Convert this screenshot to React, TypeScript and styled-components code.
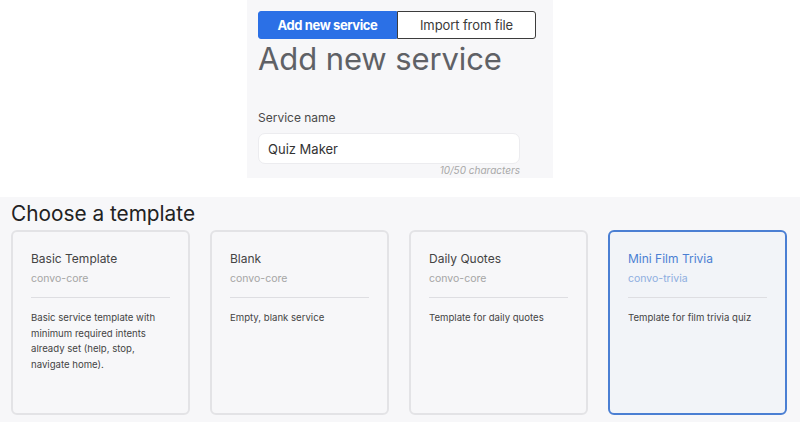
import React from "react";
import styled, { createGlobalStyle } from "styled-components";

const Global = createGlobalStyle`
  html, body { margin: 0; padding: 0; background: #ffffff; }
  body { font-family: "Inter", "Noto Sans", sans-serif; }
  * { box-sizing: border-box; }
`;

const Page = styled.div`
  width: 800px;
  height: 422px;
  display: flex;
  flex-direction: column;
  overflow: hidden;
`;

const TopPanel = styled.section`
  width: 306px;
  height: 178px;
  margin: 0 auto;
  background: #f7f7f9;
  padding: 11px 11px 0 11px;
  display: flex;
  flex-direction: column;
`;

const Tabs = styled.div`
  display: flex;
  width: 278px;
  height: 28px;
`;

const Tab = styled.button<{ $active?: boolean }>`
  flex: 1;
  height: 28px;
  margin: 0;
  font-family: "Inter", sans-serif;
  font-size: 13px;
  font-weight: ${(p) => (p.$active ? 700 : 400)};
  color: ${(p) => (p.$active ? "#ffffff" : "#3a3a3a")};
  background: ${(p) => (p.$active ? "#2b70e6" : "#ffffff")};
  border: 1px solid ${(p) => (p.$active ? "#2b70e6" : "#3c3c3c")};
  border-radius: ${(p) => (p.$active ? "3px 0 0 3px" : "0 3px 3px 0")};
  letter-spacing: ${(p) => (p.$active ? "-0.4px" : "-0.1px")};
  padding: 0;
`;

const Heading = styled.h1`
  margin: 0;
  font-family: "Inter", sans-serif;
  font-size: 31px;
  font-weight: 400;
  color: #5f6166;
  line-height: 40px;
  letter-spacing: -0.1px;
`;

const Field = styled.div`
  margin-top: 32px;
  width: 262px;
  display: flex;
  flex-direction: column;
`;

const Label = styled.label`
  font-size: 12px;
  color: #4a4a4a;
  line-height: 14px;
`;

const Input = styled.div`
  margin-top: 8px;
  height: 31px;
  background: #ffffff;
  border: 1px solid #ececef;
  border-radius: 7px;
  padding: 0 9px;
  display: flex;
  align-items: center;
  font-size: 13px;
  color: #333;
`;

const Counter = styled.div`
  text-align: right;
  font-size: 10px;
  font-style: italic;
  color: #a8a8a8;
  line-height: 12px;
  margin-top: 0;
`;

const BottomPanel = styled.section`
  margin-top: 19px;
  flex: 1;
  background: #f7f7f9;
  padding: 0 11px;
  display: flex;
  flex-direction: column;
`;

const SectionTitle = styled.h2`
  margin: 0;
  font-size: 20.8px;
  font-weight: 400;
  color: #222;
  line-height: 31px;
  margin-top: 1px;
`;

const Grid = styled.div`
  margin-top: 1px;
  display: grid;
  grid-template-columns: repeat(4, 179px);
  column-gap: 20px;
`;

const Card = styled.div<{ $selected?: boolean }>`
  height: 185px;
  border: ${(p) => (p.$selected ? "2px solid #4b7fd3" : "2px solid #e3e3e6")};
  border-radius: 6px;
  background: ${(p) => (p.$selected ? "#f2f4f8" : "#f7f7f9")};
  padding: 18px 18px 0 18px;
  display: flex;
  flex-direction: column;
`;

const CardTitle = styled.div<{ $selected?: boolean }>`
  font-size: 12px;
  line-height: 17px;
  color: ${(p) => (p.$selected ? "#4b7fd3" : "#444")};
`;

const CardSub = styled.div<{ $selected?: boolean }>`
  margin-top: 5px;
  font-size: 10.5px;
  line-height: 13px;
  color: ${(p) => (p.$selected ? "#8eaee0" : "#a5a5a5")};
`;

const Divider = styled.hr`
  margin: 12px 0 0 0;
  border: none;
  border-top: 1px solid #dedee2;
  height: 0;
`;

const CardDesc = styled.p`
  margin: 12px 0 0 0;
  font-size: 9.6px;
  line-height: 15.5px;
  color: #444;
`;

const templates = [
  { title: "Basic Template", sub: "convo-core", desc: "Basic service template with minimum required intents already set (help, stop, navigate home)." },
  { title: "Blank", sub: "convo-core", desc: "Empty, blank service" },
  { title: "Daily Quotes", sub: "convo-core", desc: "Template for daily quotes" },
  { title: "Mini Film Trivia", sub: "convo-trivia", desc: "Template for film trivia quiz", selected: true },
];

export default function App() {
  return (
    <Page>
      <Global />
      <TopPanel>
        <Tabs>
          <Tab $active>Add new service</Tab>
          <Tab>Import from file</Tab>
        </Tabs>
        <Heading>Add new service</Heading>
        <Field>
          <Label>Service name</Label>
          <Input>Quiz Maker</Input>
          <Counter>10/50 characters</Counter>
        </Field>
      </TopPanel>
      <BottomPanel>
        <SectionTitle>Choose a template</SectionTitle>
        <Grid>
          {templates.map((t) => (
            <Card key={t.title} $selected={t.selected}>
              <CardTitle $selected={t.selected}>{t.title}</CardTitle>
              <CardSub $selected={t.selected}>{t.sub}</CardSub>
              <Divider />
              <CardDesc>{t.desc}</CardDesc>
            </Card>
          ))}
        </Grid>
      </BottomPanel>
    </Page>
  );
}
